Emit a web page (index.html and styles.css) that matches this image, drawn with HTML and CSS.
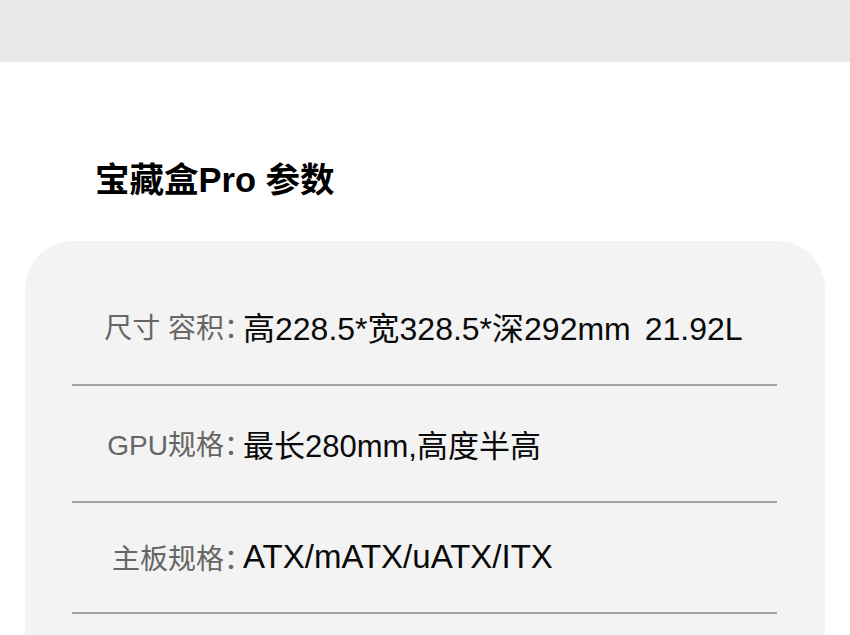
FILE: index.html
```html
<!DOCTYPE html>
<html lang="zh-CN">
<head>
<meta charset="utf-8">
<title>宝藏盒Pro 参数</title>
<link rel="stylesheet" href="styles.css">
</head>
<body>
<div class="top-band"></div>
<h1 class="title">宝藏盒Pro 参数</h1>
<section class="card">
  <div class="row row-size">
    <span class="label">尺寸 容积<span class="colon">：</span></span>
    <span class="value">高228.5*宽328.5*深292mm <span class="volume">21.92L</span></span>
  </div>
  <div class="row row-gpu">
    <span class="label">GPU规格<span class="colon">：</span></span>
    <span class="value">最长280mm,高度半高</span>
  </div>
  <div class="row row-board">
    <span class="label">主板规格<span class="colon">：</span></span>
    <span class="value">ATX/mATX/uATX/ITX</span>
  </div>
</section>
</body>
</html>
```

FILE: styles.css
```css
html, body {
  margin: 0;
  padding: 0;
  background: #ffffff;
  font-family: "Liberation Sans", "Noto Sans CJK SC", sans-serif;
}

.top-band {
  height: 62px;
  background: #e9e9e9;
}

.title {
  margin: 98px 0 0 95px;
  font-size: 34.5px;
  line-height: 40px;
  font-weight: 700;
  color: #000;
}

.card {
  margin: 41px 25px 0;
  padding: 28px 48px 60px 47px;
  background: #f3f3f3;
  border-radius: 48px 48px 0 0;
}

.row {
  display: flex;
  align-items: center;
  height: 36px;
  padding: 39px 0 40px;
  border-bottom: 2px solid #a2a2a2;
}

.row-board {
  padding-top: 36px;
  padding-bottom: 37px;
}

.label {
  width: 166px;
  flex: none;
  text-align: right;
  font-size: 28px;
  color: #666;
  white-space: nowrap;
}

.colon {
  font-family: "Noto Sans CJK SC", sans-serif;
  font-feature-settings: "halt";
}

.value {
  margin-left: 5px;
  font-size: 31px;
  color: #0a0a0a;
  white-space: nowrap;
}

.row-size .value {
  font-size: 32px;
}

.row-board .value {
  font-size: 33px;
}

.volume {
  margin-left: 5px;
}
```
